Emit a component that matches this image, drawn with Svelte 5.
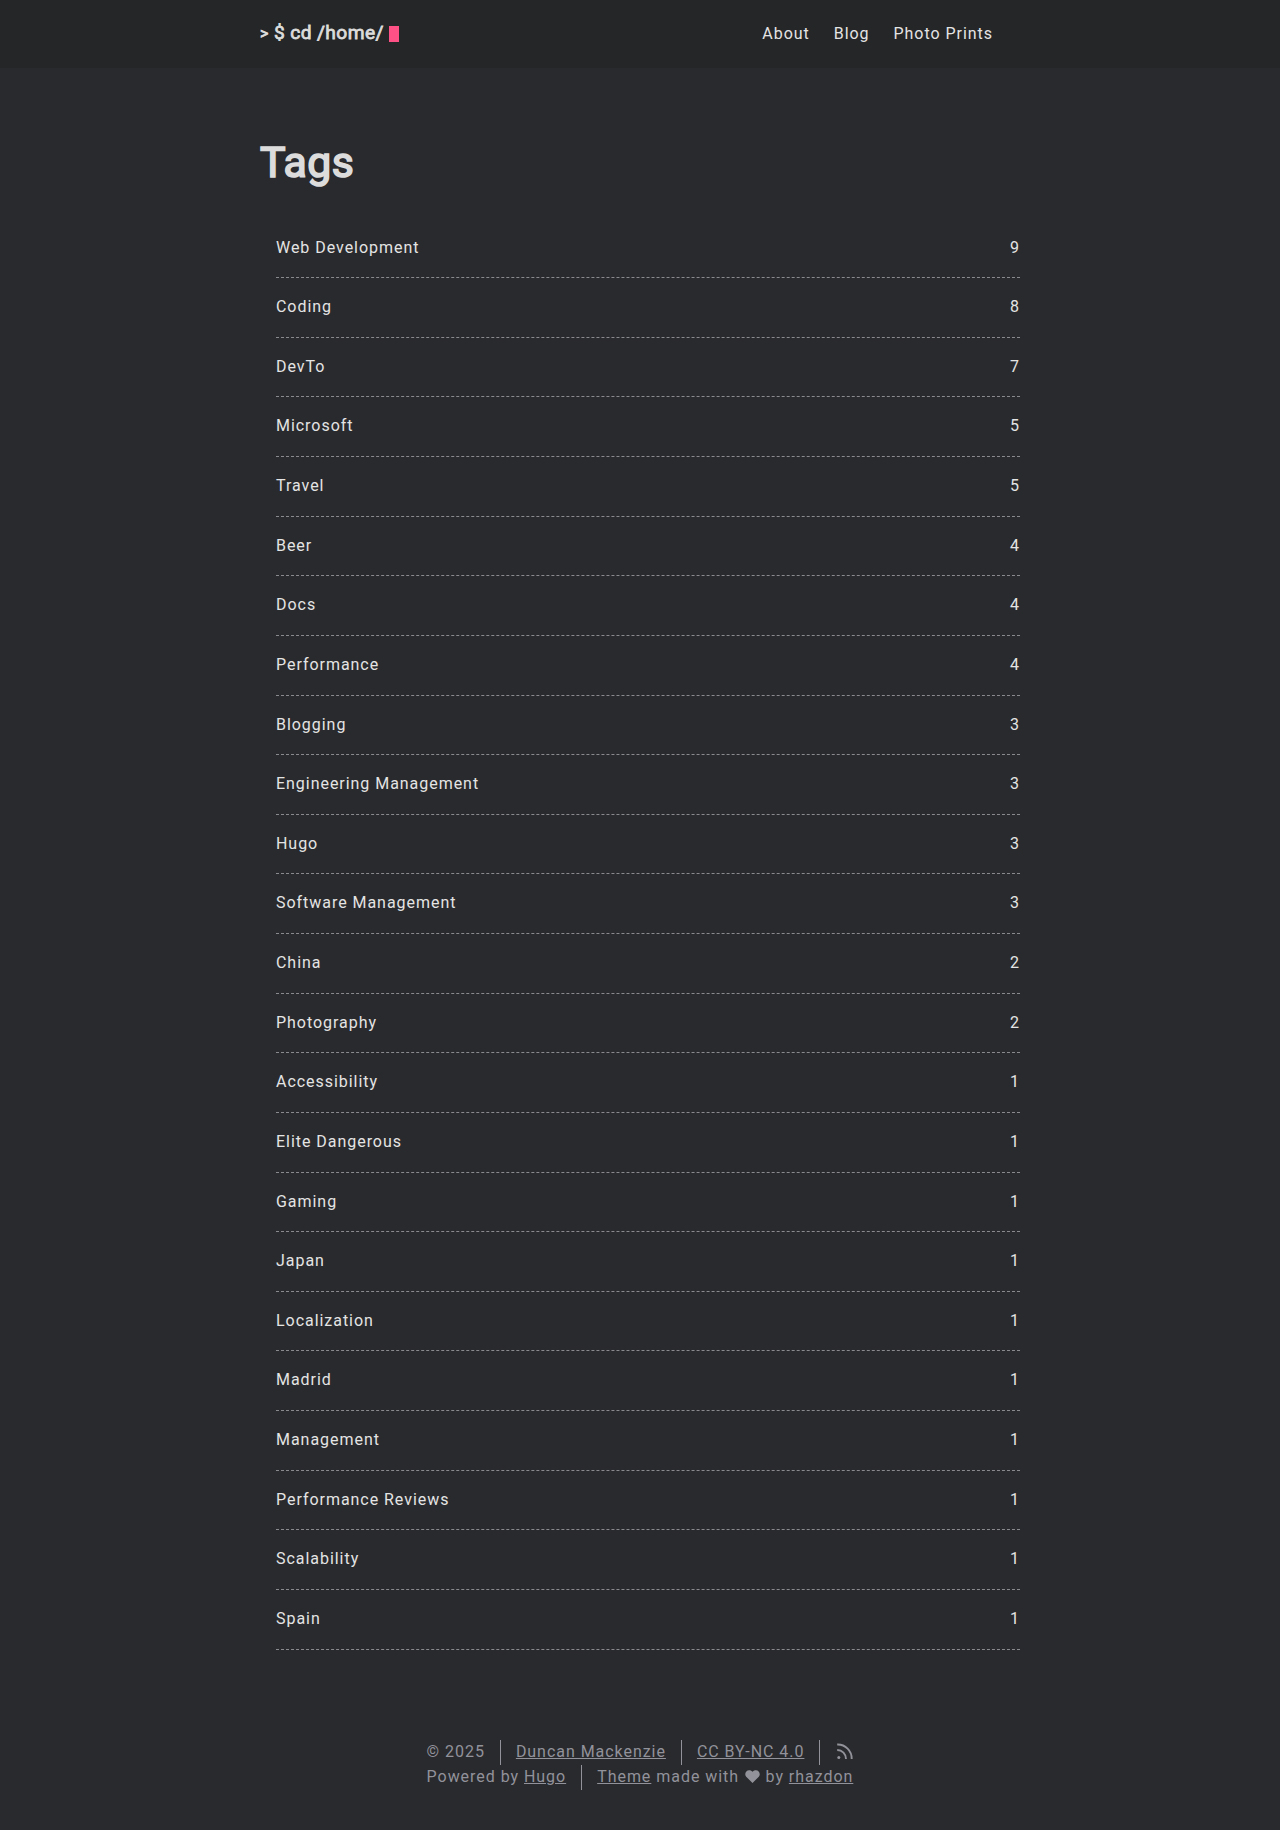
<script>
  const tags = [['Web Development',9],['Coding',8],['DevTo',7],['Microsoft',5],['Travel',5],['Beer',4],['Docs',4],['Performance',4],['Blogging',3],['Engineering Management',3],['Hugo',3],['Software Management',3],['China',2],['Photography',2],['Accessibility',1],['Elite Dangerous',1],['Gaming',1],['Japan',1],['Localization',1],['Madrid',1],['Management',1],['Performance Reviews',1],['Scalability',1],['Spain',1]];
</script>

<header>
  <div class="inner">
    <a class="logo" href="#home"><span class="mark">&gt;</span><span class="text">$ cd /home/</span><span class="cursor"></span></a>
    <nav><a href="#about">About</a><a href="#blog">Blog</a><a href="#prints">Photo Prints</a></nav>
  </div>
</header>
<main>
  <h1>Tags</h1>
  <ul>
    {#each tags as [name, count]}
      <li><a href="#tag">{name}</a><span>{count}</span></li>
    {/each}
  </ul>
</main>
<footer>
  <div class="copy">
    <div class="line"><span>© 2025</span><span><a href="#d">Duncan Mackenzie</a></span><span><a href="#c">CC BY-NC 4.0</a></span><span><svg class="rss" width="17" height="18" viewBox="0 0 17 18" fill="none" stroke="currentColor" stroke-width="1.9"><path d="M1.2 2.5A14 14 0 0 1 15.7 17M1.2 8A8.8 8.8 0 0 1 10 17"/><circle cx="2.8" cy="15.5" r="1.5" fill="currentColor" stroke="none"/></svg></span></div>
    <div class="line"><span>Powered by <a href="#h">Hugo</a></span><span><a href="#t">Theme</a> made with <svg class="heart" width="15" height="13" viewBox="0 0 16 14" fill="currentColor"><path d="M8 14L1.2 7.2C-2 3.5 3-2.5 8 2C13-2.5 18 3.5 14.8 7.2Z"/></svg> by <a href="#r">rhazdon</a></span></div>
  </div>
</footer>

<style>
  :global(body) { background: #292a2d; color: #e4e4e4; font: 16px/1.54 Roboto, sans-serif; letter-spacing: .96px; }
  * { box-sizing: border-box; }
  a { color: inherit; text-decoration: none; }
  header { height: 68px; background: #252627; }
  .inner { width: 760px; height: 68px; margin: auto; display: flex; align-items: center; justify-content: space-between; }
  .logo { display: flex; align-items: center; height: 32px; margin-bottom: 2px; color: #dcdcdc; font-weight: 400; font-size: 19.2px; letter-spacing: .4px; -webkit-text-stroke: .8px currentColor; }
  .mark { margin-right: 5.5px; padding-top: 2px; font-size: 16px; letter-spacing: 0; }
  .cursor { width: 10px; height: 16px; margin: 2px 0 0 5px; background: #fe5186; }
  nav { display: flex; gap: 24px; margin-right: 27px; }
  main { width: 760px; margin: 61px auto 0; }
  h1 { margin: 0; color: #dcdcdc; font-size: 42.8px; font-weight: 400; line-height: 66px; letter-spacing: .4px; -webkit-text-stroke: 1.7px currentColor; }
  ul { margin: 23.6px 0 0; padding: 0 0 0 16px; width: 760px; list-style: none; }
  li { display: flex; justify-content: space-between; height: 59.64px; padding-top: 17px; border-bottom: 1px dashed #8a8a8e; }
  footer { padding-top: 90px; display: flex; justify-content: center; color: #92929b; }
  .line { display: flex; height: 25px; line-height: 24.64px; }
  .line > span:not(:last-child) { border-right: 1px solid; padding-right: 15px; margin-right: 15px; }
  .rss { margin-left: 1px; vertical-align: -3px; }
  .heart { margin: 0 1px 0 .6px; vertical-align: -1px; }
  footer a { text-decoration: underline; }
</style>
